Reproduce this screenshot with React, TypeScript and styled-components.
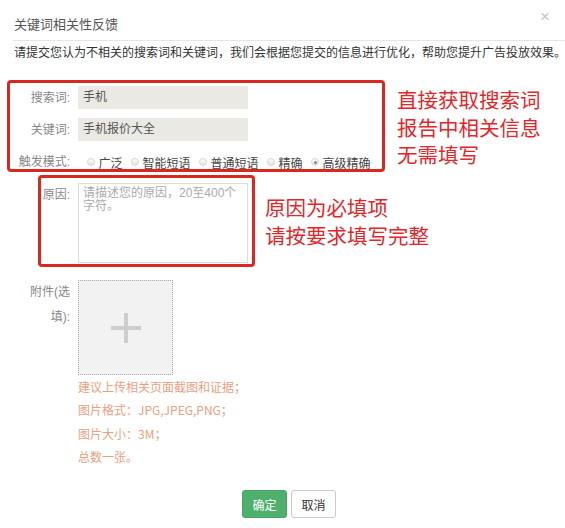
import React from 'react';
import styled, { createGlobalStyle } from 'styled-components';

const GlobalStyle = createGlobalStyle`
  html, body {
    margin: 0;
    padding: 0;
    background: #fff;
  }
  body {
    font-family: "Liberation Sans", "Noto Sans CJK SC", sans-serif;
    font-size: 12px;
    color: #333;
  }
  * {
    box-sizing: border-box;
  }
`

const Dialog = styled.div`
  width: 565px;
  height: 528px;
  display: flex;
  flex-direction: column;
  overflow: hidden;
`
const Header = styled.div`
  margin-left: 13px;
  height: 41px;
  padding: 16px 15px 0 1px;
  border-bottom: 1px solid #e5e5e5;
  display: flex;
  justify-content: space-between;
  align-items: flex-start;
`
const Title = styled.div`
  font-size: 13px;
  line-height: 18px;
  color: #555;
`
const Close = styled.div`
  margin-top: -16px;
  font-size: 17px;
  line-height: 34px;
  color: #c4c4c4;
  cursor: pointer;
`
const Intro = styled.div`
  padding-left: 14px;
  line-height: 24px;
  color: #333;
  white-space: nowrap;
`
const Annotated = styled.div<{ $left: number; $top: number; $gap: number }>`
  display: flex;
  align-items: flex-start;
  margin: ${p => p.$top}px 0 0 ${p => p.$left}px;
  gap: ${p => p.$gap}px;
`
const RedBox = styled.div<{ $width: number; $height: number; $pad: string }>`
  width: ${p => p.$width}px;
  height: ${p => p.$height}px;
  border: 3px solid #d8281f;
  border-radius: 4px;
  padding: ${p => p.$pad};
  display: flex;
  flex-direction: column;
`
const Note = styled.div<{ $top: number; $line: number }>`
  margin-top: ${p => p.$top}px;
  font-family: "Noto Sans CJK SC", sans-serif;
  font-size: 20.5px;
  line-height: ${p => p.$line}px;
  color: #e3262a;
  white-space: nowrap;
`
const Field = styled.div<{ $top?: number; $align?: string }>`
  display: flex;
  align-items: ${p => p.$align || 'center'};
  gap: 8px;
  margin-top: ${p => p.$top || 0}px;
`
const Label = styled.div<{ $width: number; $line?: number; $offset?: number }>`
  width: ${p => p.$width}px;
  margin-left: ${p => p.$offset || 0}px;
  flex-shrink: 0;
  text-align: right;
  line-height: ${p => p.$line || 16}px;
  color: #888;
`
const ReadOnlyInput = styled.div`
  width: 170px;
  height: 23px;
  padding-left: 5px;
  background: #ebe9e3;
  line-height: 23px;
  color: #555;
`
const RadioGroup = styled.div`
  display: flex;
  align-items: center;
  padding-left: 9px;
  height: 15px;
`
const Option = styled.label`
  display: flex;
  align-items: center;
  margin-right: 8.5px;
  color: #444;
  white-space: nowrap;
`
const RadioDot = styled.span<{ $checked?: boolean }>`
  position: relative;
  width: 8px;
  height: 8px;
  margin-right: 3.5px;
  border-radius: 50%;
  border: 1px solid #d6d6d6;
  background: linear-gradient(#fdfdfd, #e4e4e4);
  &::after {
    content: '';
    display: ${p => (p.$checked ? 'block' : 'none')};
    position: absolute;
    left: 1.5px;
    top: 1.5px;
    width: 3px;
    height: 3px;
    border-radius: 50%;
    background: #888;
  }
`
const ReasonArea = styled.textarea`
  width: 170px;
  height: 80px;
  margin: 0;
  padding: 3px 4px;
  border: 1px solid #dcdcdc;
  resize: none;
  font-family: "Liberation Sans", "Noto Sans CJK SC", sans-serif;
  font-size: 12px;
  line-height: 13px;
  color: #555;
  &::placeholder {
    color: #aaa;
  }
`
const UploadColumn = styled.div`
  display: flex;
  flex-direction: column;
`
const UploadBox = styled.div`
  width: 95px;
  height: 95px;
  border: 1px dotted #a8a8a8;
  background: #f2f2f2;
  display: flex;
  align-items: center;
  justify-content: center;
  cursor: pointer;
`
const Hints = styled.div`
  font-family: "Noto Sans CJK SC", sans-serif;
  color: #e9a07f;
  line-height: 23.3px;
`
const Footer = styled.div`
  margin: 22px 0 0 13px;
  display: flex;
  justify-content: center;
  gap: 4px;
`
const Button = styled.button<{ $primary?: boolean }>`
  width: 45px;
  height: 28px;
  padding: 0;
  border-radius: 3px;
  border: 1px solid ${p => (p.$primary ? '#43a862' : '#cccccc')};
  background: ${p => (p.$primary ? '#4fb06d' : '#fff')};
  color: ${p => (p.$primary ? '#fff' : '#333')};
  font-family: "Liberation Sans", "Noto Sans CJK SC", sans-serif;
  font-size: 12px;
  cursor: pointer;
`

const modes = ['广泛', '智能短语', '普通短语', '精确', '高级精确'];

const PlusIcon = () => (
  <svg width="30" height="30" viewBox="0 0 30 30">
    <rect x="0" y="13" width="30" height="4" fill="#cdcdcd" />
    <rect x="13" y="0" width="4" height="30" fill="#cdcdcd" />
  </svg>
);

const App = () => {
  return (
    <>
      <GlobalStyle />
      <Dialog>
        <Header>
          <Title>关键词相关性反馈</Title>
          <Close>×</Close>
        </Header>
        <Intro>请提交您认为不相关的搜索词和关键词，我们会根据您提交的信息进行优化，帮助您提升广告投放效果。</Intro>

        <Annotated $left={7} $top={15} $gap={12}>
          <RedBox $width={378} $height={92} $pad="3px 0 0 0">
            <Field>
              <Label $width={60}>搜索词:</Label>
              <ReadOnlyInput>手机</ReadOnlyInput>
            </Field>
            <Field $top={9}>
              <Label $width={60}>关键词:</Label>
              <ReadOnlyInput>手机报价大全</ReadOnlyInput>
            </Field>
            <Field $top={13}>
              <Label $width={60}>触发模式:</Label>
              <RadioGroup>
                {modes.map((m, i) => (
                  <Option key={m}>
                    <RadioDot $checked={i === modes.length - 1} />
                    {m}
                  </Option>
                ))}
              </RadioGroup>
            </Field>
          </RedBox>
          <Note $top={6} $line={27.5}>
            直接获取搜索词<br />
            报告中相关信息<br />
            无需填写
          </Note>
        </Annotated>

        <Annotated $left={38} $top={3} $gap={10}>
          <RedBox $width={217} $height={92} $pad="5px 0 0 0">
            <Field $align="flex-start">
              <Label $width={29} $line={24}>原因:</Label>
              <ReasonArea placeholder="请描述您的原因，20至400个字符。" />
            </Field>
          </RedBox>
          <Note $top={18} $line={28}>
            原因为必填项<br />
            请按要求填写完整
          </Note>
        </Annotated>

        <Field $top={13} $align="flex-start">
          <Label $width={41} $offset={29} $line={25}>附件(选填):</Label>
          <UploadColumn>
            <UploadBox>
              <PlusIcon />
            </UploadBox>
            <Hints>
              建议上传相关页面截图和证据；<br />
              图片格式：JPG,JPEG,PNG；<br />
              图片大小：3M；<br />
              总数一张。
            </Hints>
          </UploadColumn>
        </Field>

        <Footer>
          <Button $primary>确定</Button>
          <Button>取消</Button>
        </Footer>
      </Dialog>
    </>
  );
};

export default App;
